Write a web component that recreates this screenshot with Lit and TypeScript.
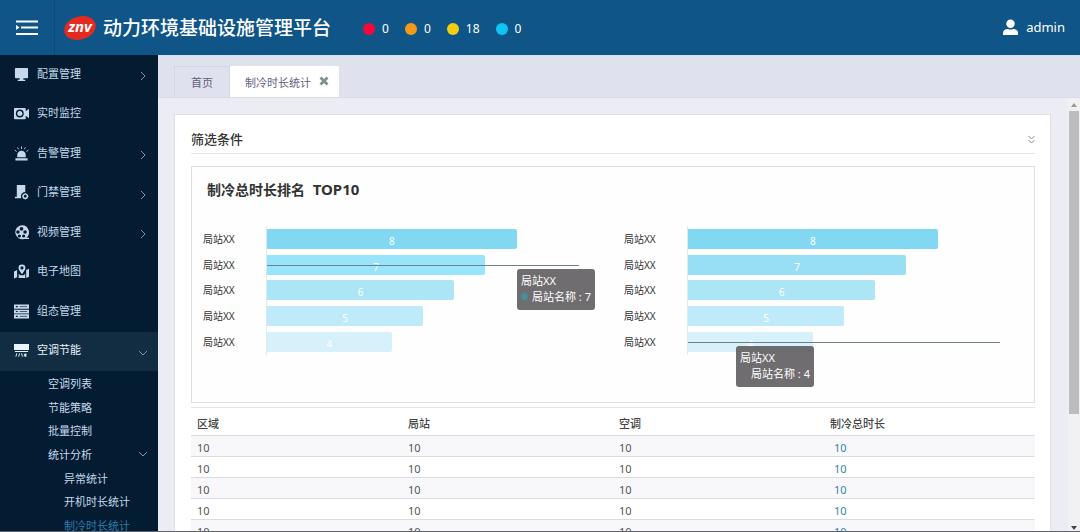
import { LitElement, html, svg, css } from "lit";
import { customElement, state } from "lit/decorators.js";

const icons: Record<string, unknown> = {
  monitor: svg`<path d="M2 1h12a1 1 0 0 1 1 1v9a1 1 0 0 1-1 1h-4v1.500h2v1.500H4v-1.500h2V12H2a1 1 0 0 1-1-1V2a1 1 0 0 1 1-1z"/>`,
  camera: svg`<path fill-rule="evenodd" d="M1 2h10.500a1 1 0 0 1 1 1v2.500L16 3v10l-3.500-2.500V13a1 1 0 0 1-1 1H1a1 1 0 0 1-1-1V3a1 1 0 0 1 1-1zM6.200 3.800a4.200 4.200 0 1 0 0 8.400 4.200 4.200 0 0 0 0-8.400zm0 1.500a2.700 2.700 0 1 1 0 5.400 2.700 2.700 0 0 1 0-5.400z"/><path d="M5.500 5.500h1.300v2.200h2V9H5.500z"/>`,
  alarm: svg`<path d="M3.500 12V9.500a4.500 4.500 0 0 1 9 0V12zM1.500 13h13v2.500h-13z"/><path d="M8 .5v2.500M3.800 1.500l1.200 2M12.200 1.500l-1.200 2M.8 4.500l2 1.300M15.200 4.500l-2 1.300" stroke="currentColor" fill="none"/>`,
  door: svg`<path d="M3 0h9v7.500A4.500 4.500 0 0 0 7.800 14H1v-1.500h2z"/><circle cx="12" cy="12" r="2.300" fill="none" stroke="currentColor" stroke-width="1.500"/><path d="M12 8.500v1M12 14.500v1M8.500 12h1M14.500 12h1" stroke="currentColor"/>`,
  reel: svg`<path fill-rule="evenodd" d="M8 .3a7.500 7.500 0 1 0 2.800 14.700H16v-1.500h-2.700A7.500 7.500 0 0 0 8 .3zM8 2a2 2 0 1 1 0 4 2 2 0 0 1 0-4zM4.200 5.500a1.900 1.900 0 1 1 0 3.800 1.900 1.900 0 0 1 0-3.800zm7.600 0a1.900 1.900 0 1 1 0 3.800 1.900 1.900 0 0 1 0-3.800zM5.700 10a1.700 1.700 0 1 1 0 3.400 1.700 1.700 0 0 1 0-3.400zm4.600 0a1.700 1.700 0 1 1 0 3.400 1.700 1.700 0 0 1 0-3.400z"/>`,
  map: svg`<path fill-rule="evenodd" d="M8.500.5a3.700 3.700 0 0 1 3.700 3.700c0 2-2 3.800-3.200 6.300H8C6.800 8 4.800 6.200 4.800 4.200A3.700 3.700 0 0 1 8.500.5zm0 2a1.700 1.700 0 1 0 0 3.400 1.700 1.700 0 0 0 0-3.400z"/><path d="M0 8l3.300-1.500V14L0 15.500zM5 10.500l1.700 1.500h3.600L12 10.500V15H5zM13 6.500L16 5v8.500L13 15z"/>`,
  server: svg`<path fill-rule="evenodd" d="M0 .5h16v4.500H0zm2 1.700v1.200h2V2.200zM0 6h16v4H0zm2 1.400v1.200h2V7.400zM0 11h16v4.500H0zm2 1.600v1.200h2v-1.200z"/><path d="M6 2.800h8M6 8h8M6 13.200h8" stroke="#031d33" stroke-width=".7"/>`,
  ac: svg`<path d="M0 1h16v6.500H0zM1 8.500h14v1H1z"/><path d="M3 11l-1 3.500M6 11l-1 3.500M8 11l1 3.500M12 11v4M10.500 12l3 2M13.500 12l-3 2" stroke="currentColor" fill="none"/>`,
};

interface MenuItem {
  label: string;
  icon: string;
  expandable?: boolean;
  active?: boolean;
}

interface SubItem {
  label: string;
  deep?: boolean;
  expandable?: boolean;
  active?: boolean;
}

const MENU: MenuItem[] = [
  { label: "配置管理", icon: "monitor", expandable: true },
  { label: "实时监控", icon: "camera" },
  { label: "告警管理", icon: "alarm", expandable: true },
  { label: "门禁管理", icon: "door", expandable: true },
  { label: "视频管理", icon: "reel", expandable: true },
  { label: "电子地图", icon: "map" },
  { label: "组态管理", icon: "server" },
  { label: "空调节能", icon: "ac", expandable: true, active: true },
];

const SUBMENU: SubItem[] = [
  { label: "空调列表" },
  { label: "节能策略" },
  { label: "批量控制" },
  { label: "统计分析", expandable: true },
  { label: "异常统计", deep: true },
  { label: "开机时长统计", deep: true },
  { label: "制冷时长统计", deep: true, active: true },
];

const chevron = (down = false) => html`<svg class="chevron" viewBox="0 0 10 10" aria-hidden="true">
  <path d=${down ? "M1 3l4 4 4-4" : "M3 1l4 4-4 4"} fill="none" stroke="currentColor" />
</svg>`;

@customElement("rank-chart")
class RankChart extends LitElement {
  static properties = {
    hovered: { type: Number },
    marker: { type: Boolean },
  };
  declare hovered: number;
  declare marker: boolean;

  static styles = css`
    :host {
      display: block;
      padding: 0 34px 0 11px;
    }
    .plot {
      display: grid;
      grid-template-rows: repeat(5, 1fr);
      height: 129px;
    }
    .row {
      display: grid;
      grid-template-columns: 64px 1fr;
      align-items: stretch;
      font-size: 10px;
      color: #333;
    }
    .label {
      align-self: center;
      line-height: 14px;
    }
    .track {
      position: relative;
      display: flex;
      align-items: center;
      border-left: 1px solid #dcebf2;
      margin-left: -1px;
    }
    .bar {
      height: 20px;
      line-height: 24px;
      border-radius: 0 2px 2px 0;
      color: #fff;
      text-align: center;
    }
    .v8 { background: #82d7f3; }
    .v7 { background: #99dff4; }
    .v6 { background: #abe5f6; }
    .v5 { background: #bfeaf9; }
    .v4 { background: #d7f1fb; }
    .hot .v7 { background: #98e5fb; }
    .pointer {
      position: absolute;
      left: 0;
      right: 0;
      top: 50%;
      border-top: 1px solid #6f8089;
    }
    .tip {
      position: absolute;
      z-index: 1;
      top: 17px;
      box-sizing: border-box;
      width: 78px;
      height: 41px;
      padding: 4px;
      border-radius: 3px;
      background: rgba(91, 89, 91, 0.88);
      color: #fff;
      font-size: 11px;
      line-height: 16px;
      white-space: nowrap;
    }
    .tip7 { left: 250px; }
    .tip4 { left: 48px; }
    .entry {
      display: flex;
      align-items: center;
      gap: 4px;
    }
    .dot {
      width: 7px;
      height: 7px;
      border-radius: 50%;
    }
    .shown { background: #478f9a; }
  `;

  render() {
    return html`<div class="plot">
      ${[8, 7, 6, 5, 4].map(
        (v) => html`<div class="row ${v === this.hovered ? "hot" : ""}">
          <span class="label">局站XX</span>
          <div class="track">
            <div class="bar v${v}" style="width:${v * 10}%">${v}</div>
            ${v === this.hovered
              ? html`<div class="pointer"></div>
                  <div class="tip tip${v}">
                    <div>局站XX</div>
                    <div class="entry">
                      <span class="dot ${this.marker ? "shown" : ""}"></span>
                      <span>局站名称 : ${v}</span>
                    </div>
                  </div>`
              : ""}
          </div>
        </div>`
      )}
    </div>`;
  }
}

@customElement("app-root")
class AppRoot extends LitElement {
  @state() private rows = [10, 10, 10, 10, 10];

  static styles = css`
    :host {
      display: flex;
      flex-direction: column;
      box-sizing: border-box;
      height: 100vh;
      overflow: hidden;
      border-bottom: 1px solid #626269;
      font-family: "Noto Sans", "Noto Sans CJK SC", sans-serif;
      font-size: 11px;
      color: #333;
    }
    button {
      display: flex;
      align-items: center;
      border: 0;
      padding: 0;
      background: none;
      color: inherit;
      font: inherit;
      cursor: pointer;
    }
    a {
      color: inherit;
      text-decoration: none;
    }
    svg { display: block; }
    ul {
      list-style: none;
      margin: 0;
      padding: 0;
    }

    .header {
      display: flex;
      align-items: center;
      flex: none;
      height: 55px;
      background: #0f5587;
      color: #fff;
    }
    .toggle {
      justify-content: center;
      box-sizing: border-box;
      width: 55px;
      height: 55px;
      border-right: 1px solid #0b4b7a;
    }
    .toggle svg { width: 22px; height: 16px; }
    .logo {
      width: 34px;
      height: 28px;
      margin: 0 6px 0 8px;
    }
    .logo text {
      font: italic bold 15px "Open Sans", sans-serif;
    }
    h1 {
      margin: 0;
      font-size: 19px;
      font-weight: 500;
      line-height: 28px;
    }
    .counts {
      display: flex;
      gap: 16px;
      margin: 2px 0 0 32px;
      font-size: 12px;
      line-height: 16px;
    }
    .count {
      display: flex;
      align-items: center;
      gap: 7px;
    }
    .count i {
      width: 12px;
      height: 12px;
      border-radius: 50%;
    }
    .red { background: #f5093b; }
    .orange { background: #f39b17; }
    .yellow { background: #f2d011; }
    .cyan { background: #10c5f6; }
    .user {
      gap: 8px;
      margin: 0 15px 2px auto;
      font-size: 13px;
      line-height: 18px;
    }
    .user svg { width: 15px; height: 16px; }

    .body {
      display: flex;
      flex: 1;
      min-height: 0;
    }
    .side {
      flex: none;
      width: 158px;
      overflow: hidden;
      background: #031c32;
      color: #c5d9ea;
    }
    .menu {
      display: grid;
      grid-template-rows: repeat(8, 1fr);
      height: 316px;
    }
    .item {
      display: flex;
      align-items: center;
      gap: 8px;
      padding: 0 10px 4px 14px;
    }
    .item svg.icon {
      width: 15px;
      height: 15px;
      margin-top: 3px;
      fill: currentColor;
    }
    .item .chevron { margin-top: 7px; }
    .item.active {
      background: #122d42;
      color: #eaf4fc;
    }
    .chevron {
      width: 10px;
      height: 10px;
      margin-left: auto;
      color: #7d95a9;
    }
    .submenu {
      display: grid;
      grid-template-rows: repeat(7, 1fr);
      height: 166px;
    }
    .sub {
      display: flex;
      align-items: center;
      padding: 0 10px 0 48px;
    }
    .deep { padding-left: 64px; }
    .sub.active { color: #2f7cab; }

    .main {
      display: flex;
      flex-direction: column;
      flex: 1;
      min-width: 0;
      background: #ecedf4;
    }
    .tabs {
      display: flex;
      align-items: flex-end;
      flex: none;
      box-sizing: border-box;
      height: 43px;
      padding-left: 16px;
      border-top: 1px solid #cfe2fa;
      border-bottom: 1px solid #d8dae5;
      background: #e0e1ee;
      color: #62617c;
    }
    .tab {
      display: flex;
      align-items: center;
      gap: 8px;
      box-sizing: border-box;
      height: 31px;
      padding: 0 16px;
      border: 1px solid #d3d5e2;
      border-bottom: 0;
    }
    .tab.current {
      padding: 0 9px 0 15px;
      border-width: 1px 1px 0 0;
      border-color: #fff;
      background: #fff;
    }
    .close svg { width: 10px; height: 10px; margin-bottom: 2px; }
    .view {
      display: flex;
      flex: 1;
      min-height: 0;
    }
    .content {
      flex: 1;
      overflow: hidden;
      padding: 16px 17px 0 16px;
    }
    .scroll {
      display: flex;
      flex-direction: column;
      align-items: center;
      width: 12px;
      padding: 5px 0 1px;
      box-sizing: border-box;
      background: #f1f1f3;
    }
    .scroll svg { width: 6px; height: 4px; }
    .thumb {
      width: 10px;
      height: 71%;
      margin: 4px 0 auto;
      background: #bcbcbf;
    }
    .panel {
      padding: 10px 15px 10px 16px;
      border: 1px solid #e0e1e5;
      background: #fff;
    }
    .filter {
      display: flex;
      align-items: center;
      justify-content: space-between;
      height: 28px;
      border-bottom: 1px solid #e4e5e8;
    }
    h2 {
      margin: 0;
      font-size: 13px;
      font-weight: 500;
      line-height: 20px;
    }
    .filter svg { width: 7px; height: 9px; }
    .ranking {
      box-sizing: border-box;
      height: 237px;
      margin: 12px 0 4px;
      border: 1px solid #dfe0e1;
      background: #fefefe;
    }
    h3 {
      margin: 11px 0 25px 15px;
      font-size: 14px;
      font-weight: 700;
      line-height: 22px;
    }
    h3 span {
      margin-left: 4px;
      font-size: 15px;
    }
    .charts {
      display: grid;
      grid-template-columns: 1fr 1fr;
    }
    table {
      width: 100%;
      table-layout: fixed;
      border-collapse: collapse;
      border-top: 1px solid #e4e4e6;
      color: #555;
    }
    th, td {
      box-sizing: border-box;
      padding: 0 0 0 6px;
      border-bottom: 1px solid #dcdce0;
      text-align: left;
      line-height: 16px;
    }
    th {
      height: 28px;
      padding-top: 4px;
      color: #444;
      font-weight: 500;
    }
    td { height: 21px; padding-top: 3px; }
    tbody tr:nth-child(odd) { background: #f8f8fb; }
    td a { margin-left: 4px; color: #2f86ab; }
  `;

  render() {
    return html`
      <header class="header">
        <button class="toggle" aria-label="菜单">
          <svg viewBox="0 0 22 16">
            <path d="M0 1.500h22M5 7.500h17M0 14h22" stroke="#fff" stroke-width="2" />
            <path d="M0 5l3.500 2.500L0 10z" fill="#fff" />
          </svg>
        </button>
        <svg class="logo" viewBox="0 0 34 28" role="img" aria-label="znv">
          <ellipse cx="17" cy="14" rx="16" ry="11.500" fill="#e52b20" transform="rotate(-16 17 14)" />
          <text x="17" y="18" text-anchor="middle" fill="#fff">znv</text>
        </svg>
        <h1>动力环境基础设施管理平台</h1>
        <div class="counts">
          <span class="count"><i class="red"></i>0</span>
          <span class="count"><i class="orange"></i>0</span>
          <span class="count"><i class="yellow"></i>18</span>
          <span class="count"><i class="cyan"></i>0</span>
        </div>
        <button class="user">
          <svg viewBox="0 0 16 17" fill="#fff">
            <circle cx="8" cy="5" r="4.500" />
            <path d="M0 17v-2c0-3 2.500-4.500 5-4.500 2 1 4 1 6 0 2.500 0 5 1.500 5 4.500v2z" />
          </svg>
          admin
        </button>
      </header>
      <div class="body">
        <nav class="side">
          <ul class="menu">
            ${MENU.map(
              (m) => html`<li class="item ${m.active ? "active" : ""}">
                <svg class="icon" viewBox="0 0 16 16" aria-hidden="true">${icons[m.icon]}</svg>
                <a href="#">${m.label}</a>
                ${m.expandable ? chevron(m.active) : ""}
              </li>`
            )}
          </ul>
          <ul class="submenu">
            ${SUBMENU.map(
              (s) => html`<li class="sub ${s.deep ? "deep" : ""} ${s.active ? "active" : ""}">
                <a href="#">${s.label}</a>
                ${s.expandable ? chevron(true) : ""}
              </li>`
            )}
          </ul>
        </nav>
        <main class="main">
          <div class="tabs">
            <div class="tab"><a href="#">首页</a></div>
            <div class="tab current">
              <a href="#">制冷时长统计</a>
              <button class="close" aria-label="关闭">
                <svg viewBox="0 0 10 10"><path d="M1.500 1.500l7 7M8.500 1.500l-7 7" stroke="#7f8e90" stroke-width="2.800" /></svg>
              </button>
            </div>
          </div>
          <div class="view">
            <div class="content">
              <section class="panel">
                <div class="filter">
                  <h2>筛选条件</h2>
                  <button aria-label="展开">
                    <svg viewBox="0 0 7 9" fill="none" stroke="#888"><path d="M.5 1l3 3 3-3M.5 5l3 3 3-3" /></svg>
                  </button>
                </div>
                <div class="ranking">
                  <h3>制冷总时长排名 <span>TOP10</span></h3>
                  <div class="charts">
                    <rank-chart .hovered=${7} .marker=${true}></rank-chart>
                    <rank-chart .hovered=${4} .marker=${false}></rank-chart>
                  </div>
                </div>
                <table>
                  <thead>
                    <tr><th>区域</th><th>局站</th><th>空调</th><th>制冷总时长</th></tr>
                  </thead>
                  <tbody>
                    ${this.rows.map(
                      (n) => html`<tr><td>${n}</td><td>${n}</td><td>${n}</td><td><a href="#">${n}</a></td></tr>`
                    )}
                  </tbody>
                </table>
              </section>
            </div>
            <div class="scroll" aria-hidden="true">
              <svg viewBox="0 0 6 4"><path d="M0 4l3-4 3 4z" fill="#999" /></svg>
              <div class="thumb"></div>
              <svg viewBox="0 0 6 4"><path d="M0 0l3 4 3-4z" fill="#444" /></svg>
            </div>
          </div>
        </main>
      </div>
    `;
  }
}
